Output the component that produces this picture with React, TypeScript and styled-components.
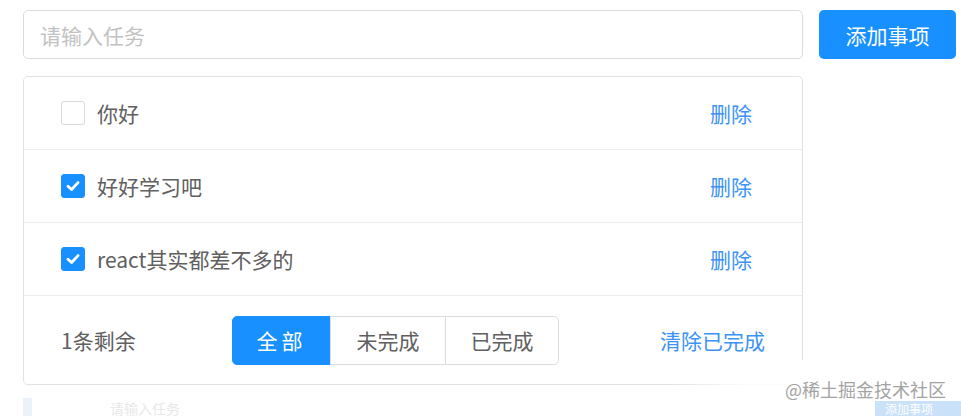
import React, { useState } from "react";
import styled, { createGlobalStyle } from "styled-components";

const GlobalStyle = createGlobalStyle`
  body {
    margin: 0;
    background: #fff;
    font-family: "Noto Sans CJK SC", "Liberation Sans", sans-serif;
    overflow: hidden;
  }
`;

const Page = styled.div`
  position: relative;
  width: 961px;
  height: 416px;
  padding: 10px 0 0 23px;
  box-sizing: border-box;
  overflow: hidden;
`;

const TopRow = styled.div`
  display: flex;
  gap: 16px;
  align-items: center;
`;

const TaskInput = styled.input`
  width: 780px;
  height: 49px;
  box-sizing: border-box;
  border: 1px solid #dcdcdc;
  border-radius: 5px;
  padding: 0 16px;
  font-size: 21px;
  font-family: inherit;
  color: #606060;
  outline: none;
  &::placeholder {
    color: #c2c2c2;
  }
`;

const AddButton = styled.button`
  width: 137px;
  height: 49px;
  border: none;
  border-radius: 5px;
  background: #1890ff;
  color: #fff;
  font-size: 21px;
  font-family: inherit;
`;

const Card = styled.div`
  margin-top: 17px;
  width: 780px;
  box-sizing: border-box;
  border: 1px solid #e2e2e2;
  border-radius: 5px;
  background: #fff;
`;

const Row = styled.div`
  display: flex;
  align-items: center;
  height: 72px;
  padding: 0 50px 0 37px;
  border-bottom: 1px solid #ececec;
`;

const Box = styled.span<{ $checked: boolean }>`
  display: flex;
  align-items: center;
  justify-content: center;
  width: 24px;
  height: 24px;
  box-sizing: border-box;
  border-radius: 3px;
  border: 1px solid ${(p) => (p.$checked ? "#1890ff" : "#d9d9d9")};
  background: ${(p) => (p.$checked ? "#1890ff" : "#fff")};
`;

const Label = styled.span`
  margin-left: 12px;
  font-size: 21px;
  color: #606060;
  flex: 1;
`;

const LinkText = styled.span`
  font-size: 21px;
  color: #3b93f5;
  cursor: pointer;
`;

const Footer = styled.div`
  display: flex;
  align-items: center;
  height: 88px;
  padding: 0 37px;
`;

const Count = styled.span`
  width: 171px;
  font-size: 21px;
  color: #606060;
`;

const Segments = styled.div`
  display: flex;
  flex: 1;
`;

const Seg = styled.button<{ $active: boolean; $w: number }>`
  width: ${(p) => p.$w}px;
  height: 49px;
  font-family: inherit;
  font-size: 21px;
  letter-spacing: ${(p) => (p.$active ? "4px" : "0")};
  border: 1px solid ${(p) => (p.$active ? "#1890ff" : "#dcdcdc")};
  margin-left: -1px;
  background: ${(p) => (p.$active ? "#1890ff" : "#fff")};
  color: ${(p) => (p.$active ? "#fff" : "#606060")};
  &:first-child {
    margin-left: 0;
    border-radius: 5px 0 0 5px;
  }
  &:last-child {
    border-radius: 0 5px 5px 0;
  }
`;

const Ghost = styled.div`
  display: flex;
  align-items: flex-end;
  margin-top: 13px;
  height: 18px;
  opacity: 0.55;
`;

const GhostBar = styled.span`
  width: 9px;
  height: 18px;
  background: #dde9f7;
`;

const GhostText = styled.span`
  margin-left: 78px;
  font-size: 14px;
  line-height: 16px;
  color: #d6d6d6;
  flex: 1;
`;

const GhostButton = styled.span`
  width: 76px;
  height: 15px;
  background: #9fcaf7;
  color: #fff;
  font-size: 12px;
  line-height: 15px;
  padding-left: 10px;
  overflow: hidden;
  white-space: nowrap;
`;

const Watermark = styled.div`
  position: absolute;
  right: 0;
  top: 360px;
  width: 290px;
  height: 38px;
  padding: 21px 15px 0 0;
  box-sizing: border-box;
  text-align: right;
  font-size: 18px;
  line-height: 17px;
  color: #a3a3a3;
  background: linear-gradient(90deg, rgba(255,255,255,0) 0%, rgba(255,255,255,0.9) 25%, #fff 100%);
`;

const Check = () => (
  <svg width="16" height="16" viewBox="0 0 16 16">
    <path d="M3 8.2 L6.6 11.5 L13 4.6" fill="none" stroke="#fff" strokeWidth="2.8" strokeLinecap="round" strokeLinejoin="round" />
  </svg>
);

const todos = [
  { text: "你好", done: false },
  { text: "好好学习吧", done: true },
  { text: "react其实都差不多的", done: true },
];

const App = () => {
  const [filter] = useState("all");
  return (
    <Page>
      <GlobalStyle />
      <TopRow>
        <TaskInput placeholder="请输入任务" />
        <AddButton>添加事项</AddButton>
      </TopRow>
      <Card>
        {todos.map((t) => (
          <Row key={t.text}>
            <Box $checked={t.done}>{t.done && <Check />}</Box>
            <Label>{t.text}</Label>
            <LinkText>删除</LinkText>
          </Row>
        ))}
        <Footer>
          <Count>1条剩余</Count>
          <Segments>
            <Seg $active={filter === "all"} $w={99}>全部</Seg>
            <Seg $active={filter === "active"} $w={116}>未完成</Seg>
            <Seg $active={filter === "done"} $w={114}>已完成</Seg>
          </Segments>
          <LinkText>清除已完成</LinkText>
        </Footer>
      </Card>
      <Ghost>
        <GhostBar />
        <GhostText>请输入任务</GhostText>
        <GhostButton>添加事项</GhostButton>
      </Ghost>
      <Watermark>@稀土掘金技术社区</Watermark>
    </Page>
  );
};

export default App;
